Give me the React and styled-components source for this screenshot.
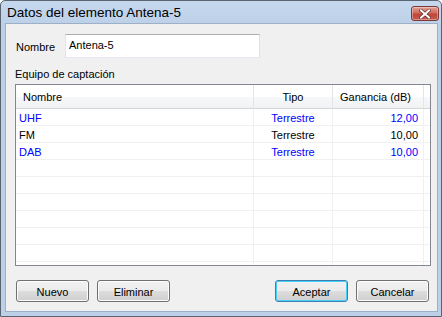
import React from "react";
import styled, { createGlobalStyle } from "styled-components";

const Global = createGlobalStyle`
  html, body { margin: 0; padding: 0; background: #ffffff; }
  body { font-family: "Liberation Sans", Arial, sans-serif; font-size: 11px; color: #000; }
  * { box-sizing: border-box; }
`;

const Window = styled.div`
  width: 442px;
  height: 317px;
  border: 1px solid #5a6470;
  border-radius: 5px 5px 0 0;
  background: linear-gradient(#c5d8ee, #bcd0e8 24px, #bcd0e8);
  display: flex;
  flex-direction: column;
  overflow: hidden;
`;

const TitleBar = styled.div`
  height: 22px;
  flex: none;
  display: flex;
  align-items: center;
  justify-content: space-between;
  padding: 0 2px 0 6px;
`;

const Title = styled.span`
  font-family: "Liberation Sans", Arial, sans-serif;
  font-size: 13.5px;
  color: #000;
  margin-top: 1px;
`;

const CloseButton = styled.div`
  width: 28px;
  height: 15px;
  margin-top: 3px;
  border: 1px solid #7a3a36;
  border-radius: 3px;
  background: linear-gradient(#e3a296, #cf6a5c 45%, #c0463a 55%, #c65a4c);
  display: flex;
  align-items: center;
  justify-content: center;
  box-shadow: inset 0 0 0 1px rgba(255, 255, 255, 0.35);
`;

const Client = styled.div`
  flex: 1;
  margin: 0 3px 4px 4px;
  background: #f0f0f0;
  border: 1px solid #9cb0c8;
  display: flex;
  flex-direction: column;
  padding: 10px 8px 0 9px;
`;

const NameRow = styled.div`
  display: flex;
  align-items: center;
  height: 24px;
`;

const Label = styled.span`
  width: 50px;
  padding-left: 1px;
  padding-top: 2px;
`;

const TextInput = styled.div`
  width: 195px;
  height: 24px;
  background: #fff;
  border: 1px solid #abadb3;
  border-color: #abadb3 #dbdfe6 #e3e9ef #e2e3ea;
  padding: 4px 3px;
`;

const GroupLabel = styled.div`
  margin-top: 10px;
  height: 15px;
`;

const List = styled.div`
  margin-top: 1px;
  height: 182px;
  width: 416px;
  background: #fff;
  border: 1px solid #828790;
  overflow: hidden;
`;

const Grid = styled.div`
  display: grid;
  grid-template-columns: 238px 79px 91px 1fr;
`;

const HeaderCell = styled.div`
  height: 24px;
  display: flex;
  align-items: center;
  justify-content: ${(p) => p.$align || "flex-start"};
  padding: 1px ${(p) => (p.$align === "flex-end" ? "12px" : "0")} 0 ${(p) => (p.$align === "flex-start" || !p.$align ? "7px" : "0")};
  background: linear-gradient(#ffffff, #ffffff 50%, #f7f8fa 51%, #f1f2f4);
  border-bottom: 1px solid #d5d5d5;
  border-right: 1px solid ${(p) => (p.$last ? "transparent" : "#e3e5e8")};
`;

const Cell = styled.div`
  height: 17px;
  display: flex;
  align-items: center;
  padding-top: 1px;
  justify-content: ${(p) => p.$align || "flex-start"};
  padding-left: ${(p) => (p.$align === "flex-start" || !p.$align ? "3px" : "0")};
  padding-right: ${(p) => (p.$align === "flex-end" ? "5px" : "0")};
  color: ${(p) => (p.$blue ? "#0000ff" : "#000")};
  border-bottom: 1px solid #f0f0f0;
  border-right: 1px solid ${(p) => (p.$last ? "transparent" : "#f0f0f0")};
`;

const ButtonRow = styled.div`
  display: flex;
  align-items: center;
  margin-top: 14px;
  gap: 8px;
  padding-left: 1px;
`;

const Spacer = styled.div`
  flex: 1;
`;

const Button = styled.div`
  width: 73px;
  height: 22px;
  border: 1px solid ${(p) => (p.$default ? "#3c7fb1" : "#707070")};
  border-radius: 3px;
  background: linear-gradient(#f2f2f2, #ebebeb 50%, #dddddd 51%, #cfcfcf);
  box-shadow: inset 0 0 0 1px ${(p) => (p.$default ? "#48d0f8" : "#fcfcfc")};
  display: flex;
  align-items: center;
  justify-content: center;
  padding-top: 1px;
`;

const rows = [
  { name: "UHF", tipo: "Terrestre", g: "12,00", blue: true },
  { name: "FM", tipo: "Terrestre", g: "10,00", blue: false },
  { name: "DAB", tipo: "Terrestre", g: "10,00", blue: true },
];

export default function App() {
  const all = [...rows];
  while (all.length < 10) all.push({ name: "", tipo: "", g: "", blue: false });
  return (
    <>
      <Global />
      <Window>
        <TitleBar>
          <Title>Datos del elemento Antena-5</Title>
          <CloseButton>
            <svg width="12" height="10" viewBox="0 0 12 10">
              <path d="M2 1.5 L10 8.5 M10 1.5 L2 8.5" stroke="#5a2a26" strokeWidth="3.2" strokeLinecap="square" />
              <path d="M2 1.5 L10 8.5 M10 1.5 L2 8.5" stroke="#ffffff" strokeWidth="2" strokeLinecap="square" />
            </svg>
          </CloseButton>
        </TitleBar>
        <Client>
          <NameRow>
            <Label>Nombre</Label>
            <TextInput>Antena-5</TextInput>
          </NameRow>
          <GroupLabel>Equipo de captación</GroupLabel>
          <List>
            <Grid>
              <HeaderCell>Nombre</HeaderCell>
              <HeaderCell $align="center">Tipo</HeaderCell>
              <HeaderCell $align="flex-end">Ganancia (dB)</HeaderCell>
              <HeaderCell $last />
              {all.map((r, i) => (
                <React.Fragment key={i}>
                  <Cell $blue={r.blue}>{r.name}</Cell>
                  <Cell $blue={r.blue} $align="center">{r.tipo}</Cell>
                  <Cell $blue={r.blue} $align="flex-end">{r.g}</Cell>
                  <Cell $last />
                </React.Fragment>
              ))}
            </Grid>
          </List>
          <ButtonRow>
            <Button>Nuevo</Button>
            <Button>Eliminar</Button>
            <Spacer />
            <Button $default>Aceptar</Button>
            <Button>Cancelar</Button>
          </ButtonRow>
        </Client>
      </Window>
    </>
  );
}
